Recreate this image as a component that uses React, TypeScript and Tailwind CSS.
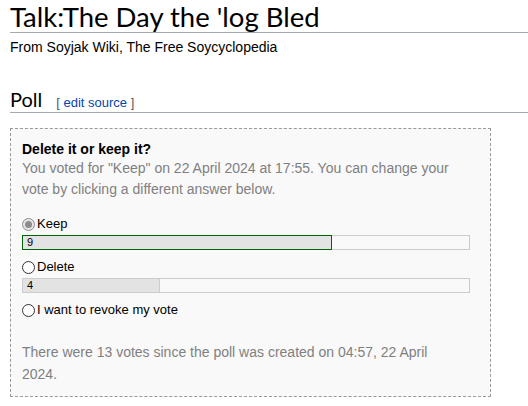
import React from "react"

const options = [
  { label: "Keep", votes: 9, checked: true, winner: true },
  { label: "Delete", votes: 4, checked: false, winner: false },
]
const total = 13

function Radio({ checked }: { checked?: boolean }) {
  return (
    <span
      className={
        "inline-flex items-center justify-center w-[13px] h-[13px] mr-[2px] rounded-full border shrink-0 " +
        (checked ? "border-[#8d8d8d] bg-[#e6e6e6]" : "border-[#333] bg-white")
      }
    >
      {checked && <span className="w-[7px] h-[7px] rounded-full bg-[#8d8d8d]" />}
    </span>
  )
}

export default function App() {
  return (
    <div className="w-[528px] h-[406px] overflow-hidden bg-white text-[#202122] font-['Liberation_Sans',Arial,sans-serif]">
      <div className="pl-[10px]">
        <h1 className="h-[33px] pt-[1px] border-b border-[#a2a9b1] text-[27.5px] leading-[32px] text-black font-['Lato',sans-serif]">
          Talk:The Day the 'log Bled
        </h1>
        <div className="pt-[3px] text-[14px] leading-[22px] text-black">From Soyjak Wiki, The Free Soycyclopedia</div>

        <h2 className="mt-[29px] h-[26px] border-b border-[#a2a9b1] flex items-baseline text-black">
          <span className="text-[20px] leading-[25px] font-['Lato',sans-serif]">Poll</span>
          <span className="ml-[14px] text-[13px] text-[#54595d]">
            [ <a className="text-[#0645ad]">edit source</a> ]
          </span>
        </h2>

        <div className="mt-[15px] w-[481px] border border-dashed border-[#999] bg-[#f9f9f9] px-[11px] pt-[11px] pb-[11px] text-[13px]">
          <div className="w-[448px]">
            <div className="font-bold text-black text-[14px] leading-[18px]">Delete it or keep it?</div>
            <div className="w-[436px] text-[#808080] text-[14px] leading-[21px]">
              You voted for "Keep" on 22 April 2024 at 17:55. You can change your vote by clicking a different answer below.
            </div>

            <div className="mt-[15px] flex flex-col">
              {options.map((o) => (
                <div key={o.label} className="mb-[8px]">
                  <label className="flex items-center h-[18px] text-[13px] text-black">
                    <Radio checked={o.checked} />
                    <span>{o.label}</span>
                  </label>
                  <div className="mt-[2px] w-[448px] h-[15px] flex border-y border-r border-[#ccc] bg-[#f9f9f9]">
                    <div
                      className={
                        "h-[15px] -my-px border bg-[#e3e3e3] text-[11px] leading-[13px] pl-[4px] text-black " +
                        (o.winner ? "border-[#006400]" : "border-[#ccc]")
                      }
                      style={{ width: `${Math.round((o.votes / total) * 448)}px` }}
                    >
                      {o.votes}
                    </div>
                  </div>
                </div>
              ))}
              <label className="flex items-center h-[18px] text-[13px] text-black">
                <Radio />
                <span>I want to revoke my vote</span>
              </label>
            </div>

            <div className="w-[436px] mt-[22px] text-[#808080] text-[14px] leading-[22px]">
              There were 13 votes since the poll was created on 04:57, 22 April 2024.
            </div>
          </div>
        </div>
      </div>
    </div>
  )
}
